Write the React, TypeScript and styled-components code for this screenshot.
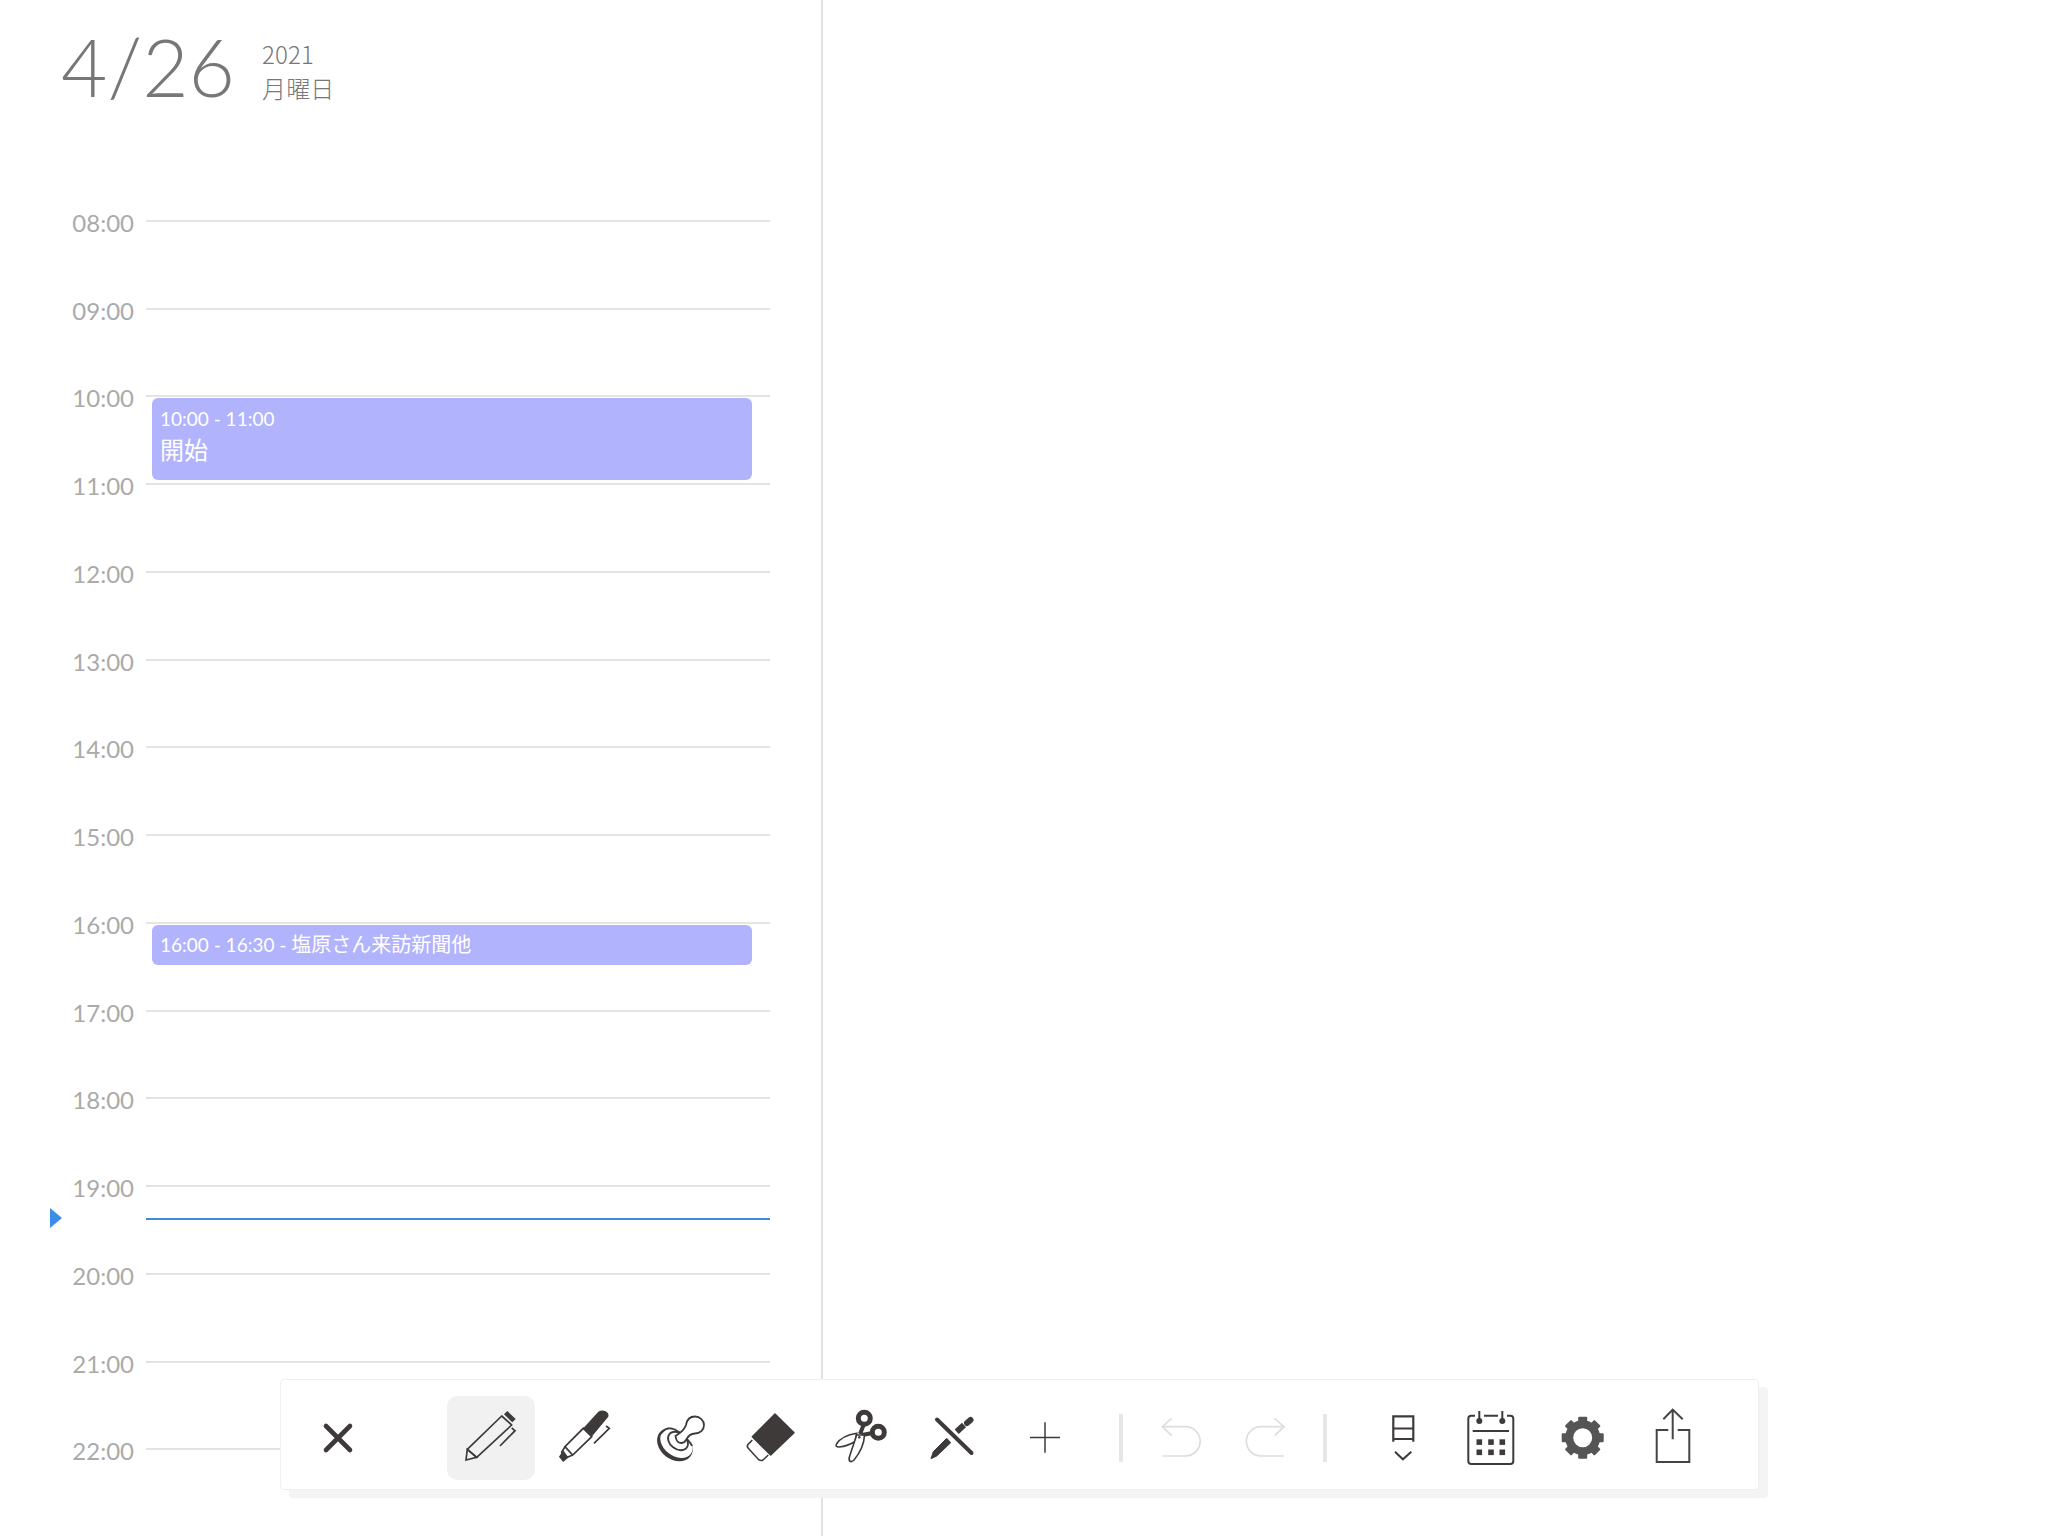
import React from "react";
import styled, { createGlobalStyle } from "styled-components";

const Global = createGlobalStyle`
  html, body { margin: 0; padding: 0; background: #fff; }
  body { font-family: Lato, "Noto Sans CJK JP", sans-serif; overflow: hidden; }
  #root { height: 1536px; }
`;

const Page = styled.div`
  position: relative;
  width: 2048px;
  height: 1536px;
  overflow: hidden;
  background: #fff;
`;

const DayPanel = styled.section`
  width: 821px;
  height: 1536px;
  box-sizing: content-box;
  border-right: 2px solid #e2e2e2;
`;

const Header = styled.header`
  height: 219.75px;
  display: flex;
  align-items: flex-start;
  padding-left: 61px;
  box-sizing: border-box;
`;

const BigDate = styled.div`
  font-family: Lato, sans-serif;
  font-weight: 300;
  font-size: 80px;
  line-height: 80px;
  margin-top: 26px;
  color: #777;
  letter-spacing: 0;
`;

const DateSide = styled.div`
  margin: 37px 0 0 27px;
  font-family: "Noto Sans CJK JP", sans-serif;
  font-weight: 300;
  font-size: 24px;
  line-height: 34px;
  letter-spacing: 0.2px;
  color: #777;
`;

const Row = styled.div`
  height: 87.75px;
  display: flex;
  align-items: flex-start;
  padding-right: 51px;
`;

const TimeLabel = styled.div`
  width: 134px;
  margin: -9px 12px 0 0;
  text-align: right;
  font-size: 24px;
  line-height: 24px;
  color: #aaa;
  flex: none;
`;

const Track = styled.div`
  position: relative;
  flex: 1;
  border-top: 2px solid #e4e4e4;
`;

const Event = styled.div<{ $h: number }>`
  position: absolute;
  z-index: 1;
  top: 1px;
  left: 6px;
  right: 18px;
  height: ${(p) => p.$h}px;
  box-sizing: border-box;
  padding: 0 8px;
  border-radius: 6px;
  background: #b2b3fd;
  color: #fff;
  display: flex;
  flex-direction: column;
  justify-content: center;
  font-family: Lato, "Noto Sans CJK JP", sans-serif;
`;

const EventTime = styled.div`
  font-size: 19px;
  line-height: 24px;
  white-space: nowrap;
`;

const EventTimeJp = styled.span`
  font-size: 20px;
`;

const EventTitle = styled.div`
  font-size: 24px;
  line-height: 38px;
  margin-bottom: 2px;
`;

const NowLine = styled.div`
  position: absolute;
  top: 31px;
  left: 0;
  right: 0;
  height: 2px;
  background: #3d8bdc;
`;

const NowMarker = styled.div`
  position: absolute;
  top: 21px;
  left: -96px;
  width: 0;
  height: 0;
  border-left: 12px solid #3a8ee8;
  border-top: 10px solid transparent;
  border-bottom: 10px solid transparent;
`;

const Toolbar = styled.nav`
  position: absolute;
  z-index: 2;
  left: 280px;
  top: 1379px;
  width: 1479px;
  height: 111px;
  box-sizing: border-box;
  padding-top: 16px;
  display: flex;
  align-items: flex-start;
  background: #fff;
  border: 1px solid #efefef;
  border-radius: 4px;
  box-shadow: 9px 8px 0 #f4f4f4;
`;

const Tool = styled.button<{ $ml: number; $active?: boolean }>`
  flex: none;
  width: ${(p) => (p.$active ? 88 : 80)}px;
  height: 84px;
  margin: 0 0 0 ${(p) => p.$ml}px;
  padding: 0;
  border: 0;
  border-radius: 10px;
  background: ${(p) => (p.$active ? "#f1f1f1" : "transparent")};
  display: flex;
  align-items: center;
  justify-content: center;
`;

const Sep = styled.div<{ $ml: number }>`
  flex: none;
  width: 4px;
  height: 48px;
  margin: 18px 0 0 ${(p) => p.$ml}px;
  background: #e6e6e6;
`;

const Glyph = styled.svg`
  display: block;
  overflow: visible;
  width: 60px;
  height: 60px;
  fill: none;
  stroke: #3e3a3a;
  stroke-width: 1.7;
`;

const D = "#3e3a3a";

const Icon = ({ cx, children }: { cx: number; children: React.ReactNode }) => (
  <Glyph viewBox={`${cx - 30} 1408 60 60`}>{children}</Glyph>
);

const hours = ["08", "09", "10", "11", "12", "13", "14", "15", "16", "17", "18", "19", "20", "21", "22"];
const gearAngles = [0, 45, 90, 135, 180, 225, 270, 315];

export default function App() {
  return (
    <Page>
      <Global />
      <DayPanel>
        <Header>
          <BigDate>4/26</BigDate>
          <DateSide>
            2021
            <br />
            月曜日
          </DateSide>
        </Header>
        {hours.map((h) => (
          <Row key={h}>
            <TimeLabel>{h}:00</TimeLabel>
            <Track>
              {h === "10" && (
                <Event $h={82}>
                  <EventTime>10:00 - 11:00</EventTime>
                  <EventTitle>開始</EventTitle>
                </Event>
              )}
              {h === "16" && (
                <Event $h={40}>
                  <EventTime>
                    16:00 - 16:30 - <EventTimeJp>塩原さん来訪新聞他</EventTimeJp>
                  </EventTime>
                </Event>
              )}
              {h === "19" && (
                <>
                  <NowMarker />
                  <NowLine />
                </>
              )}
            </Track>
          </Row>
        ))}
      </DayPanel>

      <Toolbar>
        <Tool $ml={17} aria-label="close">
          <Icon cx={338}>
            <path d="M326 1426L350 1450M350 1426L326 1450" strokeWidth={4.6} strokeLinecap="round" />
          </Icon>
        </Tool>
        <Tool $ml={69} $active aria-label="pencil">
          <Icon cx={491}>
            <path d="M501.7 1416L511.7 1425L476.7 1457.3L467.3 1449.3Z" strokeLinejoin="round" />
            <path d="M466 1460L476.7 1457.3L467.3 1449.3Z" />
            <path d="M507.3 1411L515.7 1419L512.3 1422.3L504 1414.3Z" fill={D} stroke="none" />
            <path d="M500 1446L515 1430.7L511.7 1428" />
          </Icon>
        </Tool>
        <Tool $ml={10} aria-label="marker">
          <Icon cx={585}>
            <path d="M565 1446.7L583.3 1428.3L591.7 1436.7L572.7 1455Z" />
            <path d="M583.3 1428.3L598.3 1411.7Q602 1409.5 605 1411Q609.5 1413 608.3 1416.7L591.7 1436.7Z" fill={D} stroke="none" />
            <path d="M565 1446.7L561.7 1452L567.3 1457.3L572.7 1455" />
            <path d="M560 1456.7L563.3 1451.7L567.3 1457.3L563.3 1460.7Z" fill={D} stroke={D} />
            <path d="M594 1443.3L609.3 1428.3L606 1426" />
          </Icon>
        </Tool>
        <Tool $ml={16} aria-label="stamp">
          <Icon cx={681}>
            <ellipse cx={675} cy={1444.5} rx={19.5} ry={15} transform="rotate(38 675 1444.5)" fill={D} stroke="none" />
            <ellipse cx={676.5} cy={1442.8} rx={18} ry={13} transform="rotate(38 676.5 1442.8)" fill="#fff" stroke="none" />
            <path d="M659 1436Q664 1429 668 1428.5Q674 1428 680 1433Q690 1441 692 1446" strokeWidth={1.8} />
            <ellipse cx={678} cy={1441} rx={11} ry={8} transform="rotate(38 678 1441)" fill="#fff" strokeWidth={1.8} />
            <path d="M675.5 1436C680 1433 684 1431 686 1425C687 1419 691 1416.5 695 1416.5C700 1416.5 704 1420.5 704 1425C704 1430 700 1433.5 695 1433.5C690 1433.5 688 1436 686 1440C685 1442 683 1443 681 1443C678 1443 676 1440 675.5 1436Z" fill="#fff" strokeWidth={1.8} />
          </Icon>
        </Tool>
        <Tool $ml={9} aria-label="eraser">
          <Icon cx={770}>
            <path d="M775 1414L794 1432.7L770.7 1455L752.3 1436.7Z" fill={D} stroke={D} strokeLinejoin="round" strokeWidth={1.5} />
            <path d="M752.3 1440L748 1444.5Q746.5 1446.5 748.5 1448.5L758.5 1459.5Q761.5 1461.5 763.5 1459.5L768.3 1455" strokeWidth={1.6} />
          </Icon>
        </Tool>
        <Tool $ml={11} aria-label="scissors">
          <Icon cx={861}>
            <circle cx={864.3} cy={1418.3} r={6} strokeWidth={5} />
            <circle cx={878.3} cy={1432.3} r={6} strokeWidth={5} />
            <path d="M864 1424L860 1434M872.5 1433L862 1435" strokeWidth={4} />
            <path d="M856.7 1433.3Q842 1435.5 836.5 1444Q835 1447 839 1447Q848 1446 855 1441.5Z" strokeWidth={1.6} />
            <path d="M856.7 1435L864.5 1435Q864 1448 854 1460Q851.5 1462.5 849.5 1461Q848.5 1459 850 1455Z" fill="#fff" strokeWidth={1.6} />
            <circle cx={859.3} cy={1437.3} r={1.2} fill={D} stroke="none" />
          </Icon>
        </Tool>
        <Tool $ml={11} aria-label="cut pen">
          <Icon cx={952}>
            <path d="M937 1419.5L971.5 1453" strokeWidth={4} strokeLinecap="round" />
            <path d="M967 1423L970.5 1420" strokeWidth={6} strokeLinecap="round" />
            <path d="M956.7 1431.7L964 1425" strokeWidth={6} />
            <path d="M946.7 1438.3L950.7 1442.7L936.7 1456L931 1458.7L933.3 1451.7Z" fill={D} stroke={D} strokeWidth={1} strokeLinejoin="round" />
          </Icon>
        </Tool>
        <Tool $ml={13} aria-label="add">
          <Icon cx={1045}>
            <path d="M1030 1437.5H1060M1045 1422.3V1452.7" strokeWidth={1.5} />
          </Icon>
        </Tool>
        <Sep $ml={34} />
        <Tool $ml={18} aria-label="undo">
          <Icon cx={1181}>
            <g stroke="#ddd">
              <path d="M1171.7 1418.3L1162.3 1426.7L1171.7 1435.7" />
              <path d="M1162.3 1426.7H1185.5A14.65 14.65 0 0 1 1185.5 1456H1162.3" />
            </g>
          </Icon>
        </Tool>
        <Tool $ml={4} aria-label="redo">
          <Icon cx={1265}>
            <g stroke="#ddd">
              <path d="M1274.5 1418.3L1284 1426.7L1274.5 1435.7" />
              <path d="M1284 1426.7H1261A14.65 14.65 0 0 0 1261 1456H1284" />
            </g>
          </Icon>
        </Tool>
        <Sep $ml={18} />
        <Tool $ml={36} aria-label="day view">
          <Icon cx={1403}>
            <path d="M1393.3 1441.7V1416.3H1413.3V1441.7M1393.3 1428.5H1413.3M1393.3 1439H1413.3" strokeWidth={2.2} />
            <path d="M1395 1451.7L1402.9 1459.3L1411.3 1451.7" strokeWidth={2} />
          </Icon>
        </Tool>
        <Tool $ml={8} aria-label="calendar">
          <Icon cx={1491}>
            <path d="M1475 1415.7H1471.3Q1468.3 1415.7 1468.3 1418.7V1461Q1468.3 1464 1471.3 1464H1510.3Q1513.3 1464 1513.3 1461V1418.7Q1513.3 1415.7 1510.3 1415.7H1507M1484 1415.7H1498" strokeWidth={2} />
            <path d="M1472.7 1431H1509" strokeWidth={2} />
            <path d="M1479.3 1411V1420M1502.3 1411V1420" strokeWidth={2} />
            <g fill={D} stroke="none">
              <circle cx={1479.3} cy={1421} r={3} />
              <circle cx={1502.3} cy={1421} r={3} />
              <rect x={1476.5} y={1439.3} width={5.6} height={5.6} />
              <rect x={1488.2} y={1439.3} width={5.6} height={5.6} />
              <rect x={1499.5} y={1439.3} width={5.6} height={5.6} />
              <rect x={1476.5} y={1449.5} width={5.6} height={5.6} />
              <rect x={1488.2} y={1449.5} width={5.6} height={5.6} />
              <rect x={1499.5} y={1449.5} width={5.6} height={5.6} />
            </g>
          </Icon>
        </Tool>
        <Tool $ml={12} aria-label="settings">
          <Icon cx={1583}>
            <circle cx={1582.7} cy={1437.7} r={13.5} strokeWidth={8} stroke="#555" />
            <g fill="#555" stroke="none">
              {gearAngles.map((a) => (
                <rect key={a} x={1578.2} y={1416.7} width={9} height={7} rx={1} transform={`rotate(${a} 1582.7 1437.7)`} />
              ))}
            </g>
          </Icon>
        </Tool>
        <Tool $ml={10} aria-label="share">
          <Icon cx={1673}>
            <path d="M1668.3 1430H1656.7V1462H1689.3V1430H1677.7" stroke="#444" strokeWidth={2} />
            <path d="M1672.7 1439.3V1409.6M1663.3 1419.3L1672.7 1409.6L1682.7 1419.3" stroke="#444" strokeWidth={2} />
          </Icon>
        </Tool>
      </Toolbar>
    </Page>
  );
}
